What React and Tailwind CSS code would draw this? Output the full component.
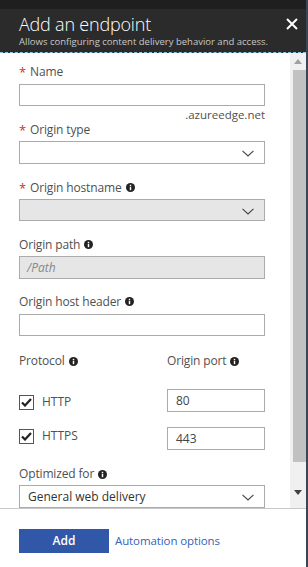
import React from "react";

const font = { fontFamily: '"Open Sans", "Noto Sans", sans-serif' };

function Info() {
  return (
    <svg width="9" height="9" viewBox="0 0 10 10" className="inline-block ml-[4px]">
      <circle cx="5" cy="5" r="5" fill="#222" />
      <rect x="4.2" y="4.2" width="1.6" height="3.8" fill="#fff" />
      <rect x="4.2" y="2" width="1.6" height="1.5" fill="#fff" />
    </svg>
  );
}

function Chevron() {
  return (
    <svg width="12" height="7" viewBox="0 0 12 7" className="absolute right-[10px] top-[8px]">
      <path d="M0.5 0.8 L6 6 L11.5 0.8" fill="none" stroke="#444" strokeWidth="1.1" />
    </svg>
  );
}

function Label({ children, req, info, className = "" }) {
  return (
    <div className={"h-[18px] leading-[18px] text-[12px] tracking-[-0.15px] text-[#505050] flex items-center " + className}>
      {req && <span className="text-[#c8312b] mr-[4px] text-[13px]">*</span>}
      <span>{children}</span>
      {info && <Info />}
    </div>
  );
}

function Check() {
  return (
    <div className="w-[15px] h-[15px] border border-[#555] bg-white flex items-center justify-center">
      <svg width="11" height="9" viewBox="0 0 11 9">
        <path d="M1 4.5 L4 7.5 L10 1" fill="none" stroke="#222" strokeWidth="2.2" />
      </svg>
    </div>
  );
}

export default function App() {
  return (
    <div style={font} className="w-[308px] h-[567px] flex flex-col bg-white border-r-2 border-[#3a4656] overflow-hidden">
      <div className="h-[9px] bg-[#1f1f1f] shrink-0" />
      <div className="h-[44px] bg-[#2b2b2b] shrink-0 border-b border-dashed border-[#8cc7ea] flex items-start pl-[19px] pr-[10px] relative">
        <div className="flex flex-col">
          <div className="text-white text-[18px] font-light leading-[22px] mt-[4px] tracking-[-0.2px]">Add an endpoint</div>
          <div className="text-[#c8c8c8] text-[9.5px] leading-[12px] mt-[1px]">Allows configuring content delivery behavior and access.</div>
        </div>
        <svg width="12" height="12" viewBox="0 0 12 12" className="absolute right-[8px] top-[9px]">
          <path d="M1 1 L11 11 M11 1 L1 11" stroke="#fff" strokeWidth="2" />
        </svg>
      </div>
      <div className="flex h-[455px] shrink-0 overflow-hidden">
        <div className="flex-1 pl-[19px] pt-[10px] flex flex-col">
          <Label req>Name</Label>
          <div className="mt-[3px] w-[246px] h-[23px] border border-[#ababab] bg-white" />
          <div className="mt-[3px] w-[246px] h-[12px] leading-[12px] text-right text-[11.5px] text-[#505050]">.azureedge.net</div>
          <Label req>Origin type</Label>
          <div className="relative mt-[2px] w-[246px] h-[23px] border border-[#ababab] bg-white"><Chevron /></div>
          <Label req info className="mt-[15px]">Origin hostname</Label>
          <div className="relative mt-[2px] w-[246px] h-[23px] border border-[#ababab] bg-[#e6e6e6]"><Chevron /></div>
          <Label info className="mt-[15px]">Origin path</Label>
          <div className="mt-[2px] w-[246px] h-[23px] border border-[#ababab] bg-[#e6e6e6] pl-[7px] text-[12px] leading-[21px] italic text-[#888]">/Path</div>
          <Label info className="mt-[14px]">Origin host header</Label>
          <div className="mt-[3px] w-[246px] h-[23px] border border-[#ababab] bg-white" />
          <div className="mt-[16px] flex">
            <Label info className="w-[148px]">Protocol</Label>
            <Label info>Origin port</Label>
          </div>
          <div className="mt-[19px] flex items-start">
            <div className="w-[148px] flex items-center pt-[4px]">
              <Check />
              <span className="ml-[8px] text-[12px] text-[#505050]">HTTP</span>
            </div>
            <div className="w-[98px] h-[23px] border border-[#ababab] pl-[8px] text-[12px] leading-[21px] text-[#444]">80</div>
          </div>
          <div className="mt-[15px] flex items-start">
            <div className="w-[148px] flex items-center pt-[0px]">
              <Check />
              <span className="ml-[8px] text-[12px] text-[#505050]">HTTPS</span>
            </div>
            <div className="w-[98px] h-[23px] border border-[#ababab] pl-[8px] text-[12px] leading-[21px] text-[#444]">443</div>
          </div>
          <Label info className="mt-[15px]">Optimized for</Label>
          <div className="relative mt-[2px] w-[246px] h-[23px] border border-[#ababab] bg-white pl-[8px] text-[12px] leading-[21px] text-[#333] shrink-0">General web delivery<Chevron /></div>
        </div>
        <div className="w-[16px] bg-[#f0f0f0] flex flex-col items-center">
          <div className="h-[17px] flex items-center justify-center">
            <svg width="8" height="5" viewBox="0 0 8 5"><path d="M0 5 L4 0 L8 5 Z" fill="#a0a0a0" /></svg>
          </div>
          <div className="ml-[2px] w-[13px] h-[392px] bg-[#c1c1c1]" />
          <div className="flex-1" />
          <div className="h-[20px] flex items-start justify-center pt-[2px]">
            <svg width="8" height="5" viewBox="0 0 8 5"><path d="M0 0 L8 0 L4 5 Z" fill="#404040" /></svg>
          </div>
        </div>
      </div>
      <div className="flex-1 border-t border-[#c8c8c8] pl-[19px] pt-[20px] flex items-start">
        <div className="w-[90px] h-[24px] bg-[#3158a8] text-white text-[12px] font-semibold flex items-center justify-center">Add</div>
        <div className="ml-[6px] h-[24px] leading-[24px] text-[11.5px] tracking-[-0.1px] text-[#3662b8]">Automation options</div>
      </div>
    </div>
  );
}
